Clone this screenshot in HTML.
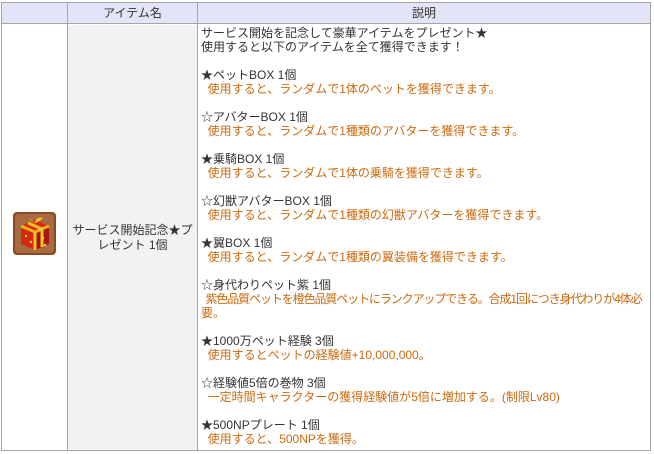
<!DOCTYPE html>
<html><head><meta charset="utf-8"><style>
body{margin:0;background:#fff;width:654px;height:454px;overflow:hidden;font-family:"Liberation Sans","Noto Sans CJK JP",sans-serif;font-size:12px;color:#333}
.b{position:absolute;background:#a5a5a5}
.hd{position:absolute;top:3px;height:20px;background:#e4e4f8;text-align:center;line-height:20px;color:#333}
.desc{position:absolute;left:201px;top:26px;width:446px;line-height:14px;white-space:pre}
.o{color:#cc6a10}
</style></head><body>
<div class="hd" style="left:2px;width:648px"></div>
<div style="position:absolute;left:67px;top:25px;width:130px;height:425px;background:#f2f2f2"></div>
<div class="hd" style="left:68px;width:129px;background:none">アイテム名</div>
<div class="hd" style="left:198px;width:452px;background:none">説明</div>
<div class="b" style="left:1px;top:2px;width:650px;height:1px"></div>
<div class="b" style="left:1px;top:23px;width:650px;height:1px"></div>
<div class="b" style="left:1px;top:450px;width:650px;height:1px"></div>
<div class="b" style="left:1px;top:2px;width:1px;height:449px"></div>
<div class="b" style="left:67px;top:2px;width:1px;height:449px"></div>
<div class="b" style="left:197px;top:2px;width:1px;height:449px"></div>
<div class="b" style="left:650px;top:2px;width:1px;height:449px"></div>
<div style="position:absolute;left:13px;top:212px;width:43px;height:43px;background:#8a4a20;border-radius:4px;overflow:hidden">
<svg width="43" height="43" viewBox="0 0 43 43"><rect x="2" y="2" width="39" height="39" rx="3" fill="#a86a40"/><path d="M8 14 L22 8 L36 14 L36 32 L22 38 L8 32 Z" fill="#d42a10"/><path d="M22 20 L36 14 L36 32 L22 38Z" fill="#a81808"/><path d="M8 14 L22 20 L36 14" stroke="#f0b020" stroke-width="3" fill="none"/><path d="M22 20 V38 M15 11 L29 17 V35" stroke="#f0c030" stroke-width="3" fill="none"/><path d="M16 6 Q22 12 22 10 Q24 4 30 6 Q26 10 22 11 Q18 10 16 6Z" fill="#f0c030"/><circle cx="13" cy="24" r="1.2" fill="#ffd040"/><circle cx="18" cy="30" r="1.2" fill="#ffd040"/><circle cx="30" cy="26" r="1.2" fill="#ffd040"/><circle cx="32" cy="33" r="1.2" fill="#ffd040"/></svg></div>
<div style="position:absolute;left:68px;top:223px;width:129px;text-align:center;line-height:15px">サービス開始記念★プ<br>レゼント 1個</div>
<div class="desc">サービス開始を記念して豪華アイテムをプレゼント★
使用すると以下のアイテムを全て獲得できます！

★ペットBOX 1個
<span class="o">  使用すると、ランダムで1体のペットを獲得できます。</span>

☆アバターBOX 1個
<span class="o">  使用すると、ランダムで1種類のアバターを獲得できます。</span>

★乗騎BOX 1個
<span class="o">  使用すると、ランダムで1体の乗騎を獲得できます。</span>

☆幻獣アバターBOX 1個
<span class="o">  使用すると、ランダムで1種類の幻獣アバターを獲得できます。</span>

★翼BOX 1個
<span class="o">  使用すると、ランダムで1種類の翼装備を獲得できます。</span>

☆身代わりペット紫 1個
<span class="o" style="letter-spacing:-1.1px">  紫色品質ペットを橙色品質ペットにランクアップできる。合成1回につき身代わりが4体必</span>
<span class="o">要。</span>

★1000万ペット経験 3個
<span class="o">  使用するとペットの経験値+10,000,000。</span>

☆経験値5倍の巻物 3個
<span class="o">  一定時間キャラクターの獲得経験値が5倍に増加する。(制限Lv80)</span>

★500NPプレート 1個
<span class="o">  使用すると、500NPを獲得。</span></div>
</body></html>
